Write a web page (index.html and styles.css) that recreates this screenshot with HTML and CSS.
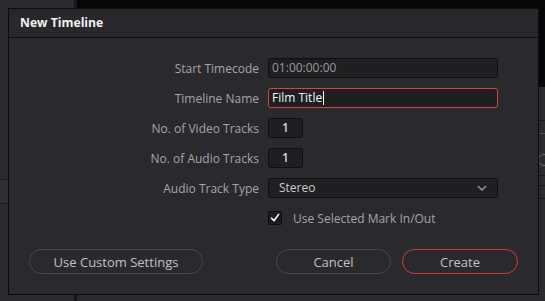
FILE: index.html
```html
<!DOCTYPE html>
<html>
<head>
<meta charset="utf-8">
<link rel="stylesheet" href="styles.css">
</head>
<body>
<div class="backdrop">
  <div class="side-panel">
    <div class="side-band"></div>
  </div>
  <div class="main-area">
    <div class="viewer"></div>
    <div class="right-panel">
      <div class="rp-line rp-l1"></div>
      <div class="rp-line rp-l2"></div>
      <div class="rp-knob"></div>
      <div class="rp-line rp-l3"></div>
      <div class="rp-line rp-l4"></div>
      <div class="rp-line rp-l5"></div>
    </div>
  </div>
</div>

<div class="dialog">
  <div class="dialog-title">New Timeline</div>
  <div class="dialog-body">
    <div class="form">
      <label class="lbl">Start Timecode</label>
      <div class="field wide"><span class="val dim">01:00:00:00</span></div>

      <label class="lbl">Timeline Name</label>
      <div class="field wide focused"><span class="val bright">Film Title</span><span class="caret"></span></div>

      <label class="lbl">No. of Video Tracks</label>
      <div class="field small"><span class="val num">1</span></div>

      <label class="lbl">No. of Audio Tracks</label>
      <div class="field small"><span class="val num">1</span></div>

      <label class="lbl">Audio Track Type</label>
      <div class="field wide select">
        <span class="val sel">Stereo</span>
        <svg class="chev" width="10" height="6" viewBox="0 0 10 6"><path d="M1 1 L5 5 L9 1" fill="none" stroke="#9a9a9e" stroke-width="1.4"/></svg>
      </div>

      <span class="lbl"></span>
      <div class="check-row">
        <span class="checkbox">
          <svg width="14" height="14" viewBox="0 0 14 14"><path d="M3 7.2 L5.8 10.2 L11.2 2.8" fill="none" stroke="#ffffff" stroke-width="1.8" stroke-linecap="round" stroke-linejoin="round"/></svg>
        </span>
        <span class="check-label">Use Selected Mark In/Out</span>
      </div>
    </div>

    <div class="buttons">
      <button class="btn custom">Use Custom Settings</button>
      <div class="btn-group">
        <button class="btn cancel">Cancel</button>
        <button class="btn create">Create</button>
      </div>
    </div>
  </div>
</div>
</body>
</html>
```

FILE: styles.css
```css
* { box-sizing: border-box; }

html, body {
  margin: 0;
  padding: 0;
  width: 545px;
  height: 301px;
  overflow: hidden;
  background: #2a2a2f;
  font-family: "Open Sans", "Noto Sans", sans-serif;
}

body { position: relative; }

.backdrop {
  display: flex;
  width: 545px;
  height: 301px;
}

.side-panel {
  width: 77px;
  height: 100%;
  background: #2a2a2f;
  border-right: 3px solid #17171a;
  padding-top: 179px;
}

.side-band {
  height: 25px;
  background: #2e2e33;
  border-top: 1px solid #1c1c1f;
  border-bottom: 1px solid #1c1c1f;
}

.main-area {
  flex: 1;
  display: flex;
  flex-direction: column;
}

.viewer {
  height: 87px;
  background: #060606;
}

.right-panel {
  flex: 1;
  background: #2a2a2f;
  display: flex;
  flex-direction: column;
  align-items: flex-end;
}

.rp-line {
  width: 10px;
  height: 1px;
  background: #1a1a1d;
}
.rp-l1 { margin-top: 33px; }
.rp-l2 { margin-top: 12px; background: #4a4a50; }
.rp-knob {
  margin-top: 20px;
  width: 12px;
  height: 12px;
  border: 1px solid #6a6a70;
  border-radius: 50%;
  margin-right: -5px;
}
.rp-l3 { margin-top: 9px; }
.rp-l4 { margin-top: 9px; }
.rp-l5 { margin-top: 12px; }

.dialog {
  position: absolute;
  left: 8px;
  top: 8px;
  width: 531px;
  height: 287px;
  background: #29292e;
  border: 1px solid #0c0c0e;
  display: flex;
  flex-direction: column;
}

.dialog-title {
  height: 29px;
  padding-left: 11px;
  display: flex;
  align-items: center;
  font-weight: 700;
  font-size: 12.2px;
  color: #f2f2f2;
  background: #27272c;
  border-bottom: 1px solid #0e0e10;
  padding-bottom: 1px;
}

.dialog-body {
  flex: 1;
  display: flex;
  flex-direction: column;
  padding: 20px 20px 0 20px;
}

.form {
  display: grid;
  grid-template-columns: 230px 230px;
  column-gap: 9px;
  row-gap: 10px;
  grid-auto-rows: 20px;
}

.lbl {
  justify-self: end;
  align-self: center;
  font-size: 12px;
  color: #a5a5a8;
  white-space: nowrap;
}

.field {
  height: 20px;
  background: #1f1f22;
  border: 1px solid #0f0f11;
  border-radius: 3px;
  display: flex;
  align-items: center;
  padding-left: 3px;
  font-size: 12px;
}

.field.wide { width: 230px; }
.field.small { width: 35px; justify-content: center; padding-left: 0; }
.field.focused { border-color: #d9453d; }
.field.select { padding-left: 10px; padding-right: 10px; justify-content: space-between; }

.val { white-space: nowrap; line-height: 1; }
.dim { color: #9b9b9e; }
.bright { color: #f4f4f4; }
.num { color: #d6d6d8; font-weight: 600; }
.sel { color: #cbcbce; }

.caret {
  width: 1px;
  height: 14px;
  background: #f4f4f4;
  margin-left: 0.5px;
}

.check-row {
  display: flex;
  align-items: center;
  gap: 11px;
}

.checkbox {
  width: 14px;
  height: 14px;
  background: #1c1c1f;
  border: 1px solid #0d0d0f;
  border-radius: 2px;
  display: flex;
  align-items: center;
  justify-content: center;
}
.checkbox svg { display: block; }

.check-label {
  font-size: 12px;
  color: #a5a5a8;
}

.buttons {
  margin-top: 21px;
  display: flex;
  justify-content: space-between;
}

.btn-group {
  display: flex;
  gap: 11px;
}

.btn {
  height: 25px;
  border-radius: 13px;
  background: transparent;
  border: 1px solid #48484e;
  color: #c2c2c5;
  font-family: "Open Sans", "Noto Sans", sans-serif;
  font-size: 13px;
  padding: 0;
  display: flex;
  align-items: center;
  justify-content: center;
}

.btn.custom { width: 174px; }
.btn.cancel { width: 115px; }
.btn.create { width: 116px; border-color: #c9413a; }
```
